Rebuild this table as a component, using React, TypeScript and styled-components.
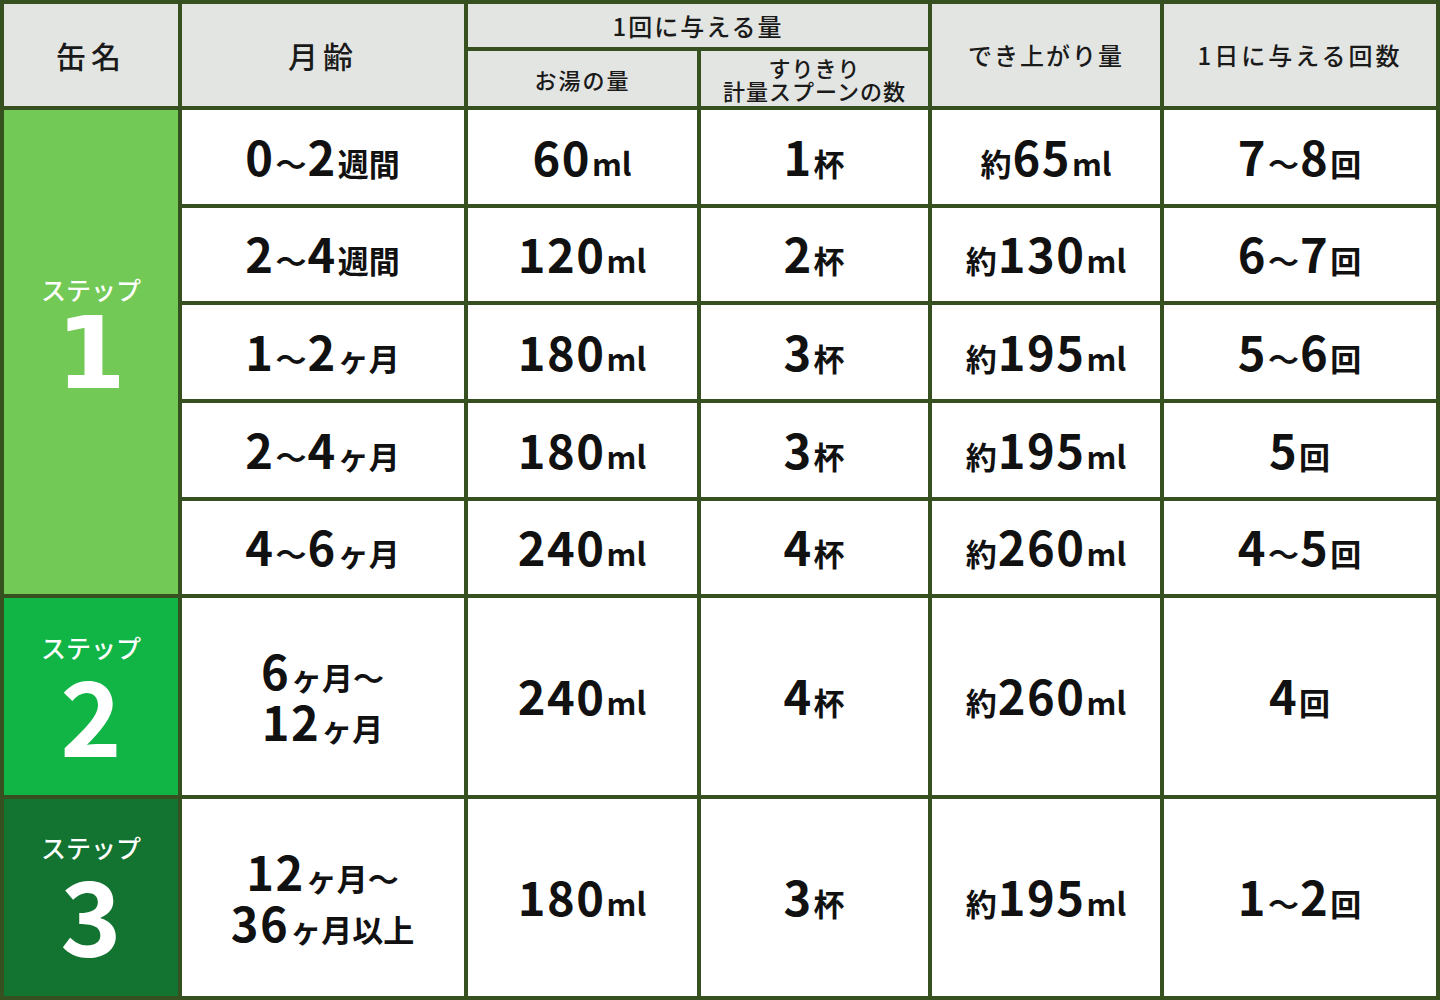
import React from 'react'
import styled, { createGlobalStyle } from 'styled-components'

const GlobalStyle = createGlobalStyle`
    html, body {
        margin: 0;
        padding: 0;
        background: #ffffff;
    }
    body {
        font-family: "Noto Sans CJK JP", "Noto Sans", sans-serif;
        color: #111111;
    }
`

const LINE = '#36511f'

const Table = styled.div`
    display: grid;
    grid-template-columns: 174px 282px 229px 227px 228px 272px;
    grid-template-rows: 43px 55px 94px 93px 94px 94px 93px 197px 197px;
    gap: 4px;
    padding: 4px;
    width: 1440px;
    height: 1000px;
    box-sizing: border-box;
    background: ${LINE};
`

type Area = { $col: string; $row: string }

const HeadCell = styled.div<Area & { $size?: number; $spacing?: number }>`
    grid-column: ${p => p.$col};
    grid-row: ${p => p.$row};
    display: flex;
    flex-direction: column;
    align-items: center;
    justify-content: center;
    background: #e3e5e2;
    font-size: ${p => p.$size ?? 24}px;
    font-weight: 500;
    letter-spacing: ${p => p.$spacing ?? 2}px;
    line-height: 1;
    color: #1a1a1a;
`

const HeadSmall = styled.span`
    display: block;
    font-size: 22px;
    letter-spacing: 1px;
    line-height: 23px;
    text-align: center;
`

const StepCell = styled.div<Area & { $bg: string; $lift?: number; $drop?: number }>`
    grid-column: ${p => p.$col};
    grid-row: ${p => p.$row};
    display: flex;
    flex-direction: column;
    align-items: center;
    justify-content: center;
    background: ${p => p.$bg};
    color: #ffffff;
    padding-bottom: ${p => p.$lift ?? 0}px;
    padding-top: ${p => p.$drop ?? 0}px;
`

const StepLabel = styled.span`
    font-size: 25px;
    font-weight: 500;
    line-height: 26px;
`

// the "1" in the reference has a foot, which DejaVu Sans draws
const StepNum = styled.span<{ $footed?: boolean }>`
    font-family: ${p => (p.$footed ? '"DejaVu Sans"' : '"Noto Sans CJK JP"')}, sans-serif;
    font-size: ${p => (p.$footed ? 100 : 104)}px;
    font-weight: 700;
    line-height: 104px;
`

const Cell = styled.div<Area>`
    grid-column: ${p => p.$col};
    grid-row: ${p => p.$row};
    display: flex;
    flex-direction: column;
    align-items: center;
    justify-content: center;
    background: #ffffff;
    font-weight: 700;
    white-space: nowrap;
`

const Line = styled.div`
    font-size: 42px;
    line-height: 50px;
    text-align: center;
`

const Num = styled.span`
    font-size: 47px;
    letter-spacing: 1.5px;
    line-height: 1;
`

const Unit = styled.span`
    font-size: 31px;
    line-height: 1;
    margin: 0 1px;
`

// text in [] is drawn at unit size, the rest at number size
const Value: React.FC<{ text: string }> = ({ text }) => {
    const parts = text.split(/(\[[^\]]*\])/).filter(Boolean)
    return (
        <Line>
            {parts.map((p, i) =>
                p.startsWith('[') ? <Unit key={i}>{p.slice(1, -1)}</Unit> : <Num key={i}>{p}</Num>
            )}
        </Line>
    )
}

const rows: string[][] = [
    ['0[〜]2[週間]', '60[ml]', '1[杯]', '[約]65[ml]', '7[〜]8[回]'],
    ['2[〜]4[週間]', '120[ml]', '2[杯]', '[約]130[ml]', '6[〜]7[回]'],
    ['1[〜]2[ヶ月]', '180[ml]', '3[杯]', '[約]195[ml]', '5[〜]6[回]'],
    ['2[〜]4[ヶ月]', '180[ml]', '3[杯]', '[約]195[ml]', '5[回]'],
    ['4[〜]6[ヶ月]', '240[ml]', '4[杯]', '[約]260[ml]', '4[〜]5[回]'],
    ['6[ヶ月〜]|12[ヶ月]', '240[ml]', '4[杯]', '[約]260[ml]', '4[回]'],
    ['12[ヶ月〜]|36[ヶ月以上]', '180[ml]', '3[杯]', '[約]195[ml]', '1[〜]2[回]'],
]

export default function App() {
    return (
        <>
            <GlobalStyle />
            <Table>
                <HeadCell $col="1" $row="1 / 3" $size={30} $spacing={5}>缶名</HeadCell>
                <HeadCell $col="2" $row="1 / 3" $size={30} $spacing={5}>月齢</HeadCell>
                <HeadCell $col="3 / 5" $row="1">1回に与える量</HeadCell>
                <HeadCell $col="3" $row="2" $size={22}>お湯の量</HeadCell>
                <HeadCell $col="4" $row="2" $size={22}>
                    <HeadSmall>すりきり</HeadSmall>
                    <HeadSmall>計量スプーンの数</HeadSmall>
                </HeadCell>
                <HeadCell $col="5" $row="1 / 3">でき上がり量</HeadCell>
                <HeadCell $col="6" $row="1 / 3" $spacing={3}>1日に与える回数</HeadCell>

                <StepCell $col="1" $row="3 / 8" $bg="#72c955" $lift={22}>
                    <StepLabel>ステップ</StepLabel>
                    <StepNum $footed>1</StepNum>
                </StepCell>
                <StepCell $col="1" $row="8" $bg="#10b546" $drop={4}>
                    <StepLabel>ステップ</StepLabel>
                    <StepNum>2</StepNum>
                </StepCell>
                <StepCell $col="1" $row="9" $bg="#137331" $drop={2}>
                    <StepLabel>ステップ</StepLabel>
                    <StepNum>3</StepNum>
                </StepCell>

                {rows.map((r, ri) =>
                    r.map((v, ci) => (
                        <Cell key={`${ri}-${ci}`} $col={String(ci + 2)} $row={String(ri + 3)}>
                            {v.split('|').map((l, li) => (
                                <Value key={li} text={l} />
                            ))}
                        </Cell>
                    ))
                )}
            </Table>
        </>
    )
}
